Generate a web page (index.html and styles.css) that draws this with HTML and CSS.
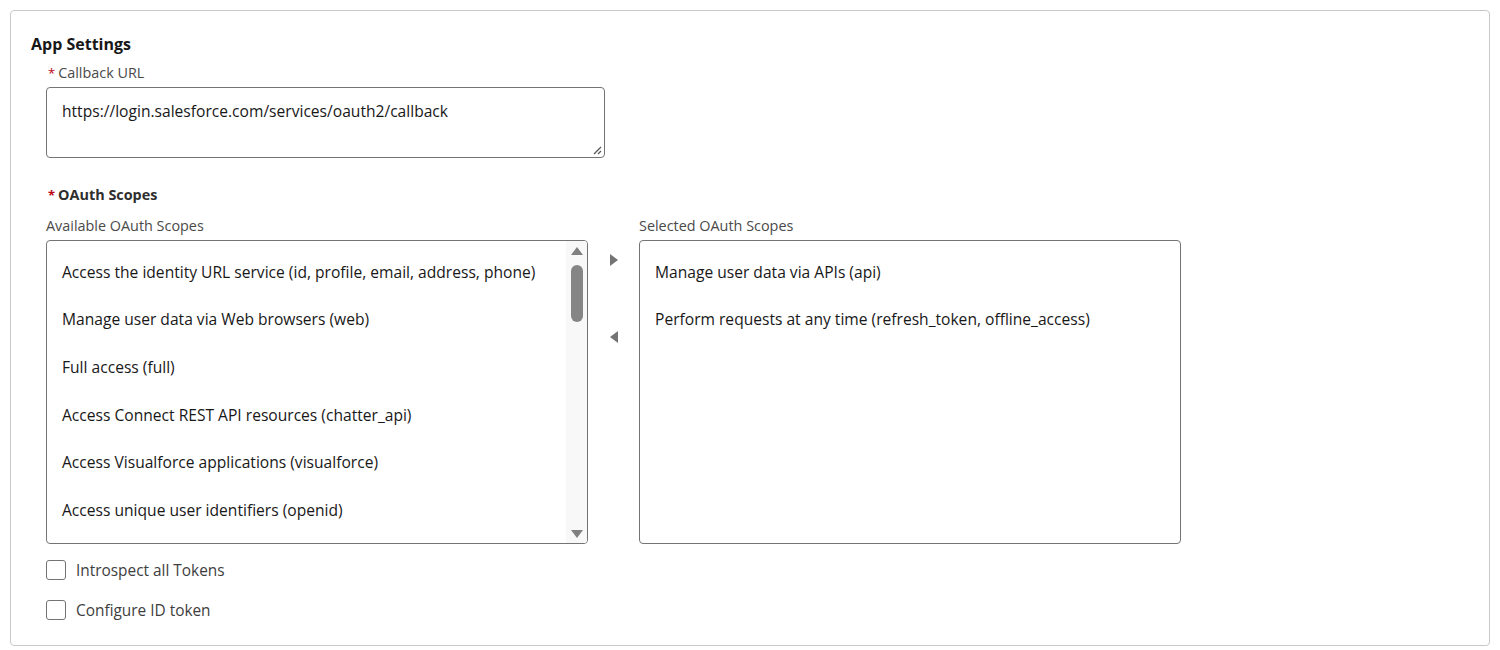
FILE: index.html
```html
<!DOCTYPE html>
<html lang="en">
<head>
<meta charset="utf-8">
<title>App Settings</title>
<link rel="stylesheet" href="styles.css">
</head>
<body>
<div class="card">
  <h2 class="title">App Settings</h2>
  <div class="field">
    <div class="label"><span class="req">*</span>Callback URL</div>
    <div class="textarea">https://login.salesforce.com/services/oauth2/callback
      <svg class="grip" width="10" height="10" viewBox="0 0 10 10"><path d="M9 2 L2 9 M9 6 L6 9" stroke="#555" stroke-width="1.2" fill="none"/></svg>
    </div>
  </div>
  <div class="group-label"><span class="req">*</span>OAuth Scopes</div>
  <div class="dueling">
    <div class="col">
      <div class="label plain">Available OAuth Scopes</div>
      <div class="listbox">
        <ul class="items">
          <li>Access the identity URL service (id, profile, email, address, phone)</li>
          <li>Manage user data via Web browsers (web)</li>
          <li>Full access (full)</li>
          <li>Access Connect REST API resources (chatter_api)</li>
          <li>Access Visualforce applications (visualforce)</li>
          <li>Access unique user identifiers (openid)</li>
        </ul>
        <div class="scrollbar">
          <svg class="sb-arrow" width="12" height="8" viewBox="0 0 12 8"><path d="M6 0 L12 8 L0 8 Z" fill="#808080"/></svg>
          <div class="thumb"></div>
          <div class="sb-spacer"></div>
          <svg class="sb-arrow" width="12" height="8" viewBox="0 0 12 8"><path d="M0 0 L12 0 L6 8 Z" fill="#808080"/></svg>
        </div>
      </div>
    </div>
    <div class="movers">
      <svg class="mv" width="8" height="12" viewBox="0 0 8 12"><path d="M0 0 L8 6 L0 12 Z" fill="#747474"/></svg>
      <svg class="mv mv2" width="8" height="12" viewBox="0 0 8 12"><path d="M8 0 L0 6 L8 12 Z" fill="#747474"/></svg>
    </div>
    <div class="col">
      <div class="label plain">Selected OAuth Scopes</div>
      <div class="listbox">
        <ul class="items">
          <li>Manage user data via APIs (api)</li>
          <li>Perform requests at any time (refresh_token, offline_access)</li>
        </ul>
      </div>
    </div>
  </div>
  <div class="checks">
    <label class="check"><span class="box"></span>Introspect all Tokens</label>
    <label class="check"><span class="box"></span>Configure ID token</label>
  </div>
</div>
</body>
</html>
```
FILE: styles.css
```css
html, body {
  margin: 0;
  padding: 0;
  background: #ffffff;
}
body {
  padding: 10px;
  font-family: "Open Sans", "Noto Sans", sans-serif;
  color: #181818;
}
.card {
  width: 1480px;
  height: 636px;
  box-sizing: border-box;
  border: 1px solid #c9c9c9;
  border-radius: 4px;
  padding: 22px 0 0 20px;
}
.title {
  margin: 0;
  font-size: 16px;
  font-weight: 700;
  line-height: 22px;
  color: #181818;
}
.field {
  margin-left: 15px;
  margin-top: 8px;
}
.label {
  font-size: 14.4px;
  line-height: 20px;
  color: #4a4a4a;
}
.req {
  color: #ba0517;
  margin: 0 3px 0 2px;
  font-size: 13px;
}
.textarea {
  position: relative;
  margin-top: 4px;
  width: 559px;
  height: 71px;
  box-sizing: border-box;
  border: 1px solid #747474;
  border-radius: 4px;
  padding: 12px 15px 0 15px;
  font-size: 15.6px;
  line-height: 22px;
  color: #181818;
}
.grip {
  position: absolute;
  right: 2px;
  bottom: 2px;
}
.group-label {
  margin: 26px 0 0 15px;
  font-size: 14.4px;
  font-weight: 700;
  line-height: 22px;
  color: #2e2e2e;
}
.dueling {
  display: flex;
  margin: 10px 0 0 15px;
}
.col {
  display: flex;
  flex-direction: column;
}
.plain {
  margin-bottom: 4px;
}
.listbox {
  display: flex;
  width: 542px;
  height: 304px;
  box-sizing: border-box;
  border: 1px solid #747474;
  border-radius: 4px;
  overflow: hidden;
}
.items {
  list-style: none;
  margin: 0;
  padding: 7px 0 0 15px;
  flex: 1;
}
.items li {
  font-size: 15.6px;
  line-height: 22px;
  padding: 12.8px 0;
  color: #181818;
  white-space: nowrap;
}
.scrollbar {
  width: 21px;
  background: #f8f8f8;
  display: flex;
  flex-direction: column;
  align-items: center;
  padding: 6px 0 5px 0;
  box-sizing: border-box;
}
.thumb {
  width: 12px;
  height: 57px;
  margin-top: 10px;
  border-radius: 6px;
  background: #858585;
}
.sb-spacer {
  flex: 1;
}
.movers {
  width: 51px;
  display: flex;
  flex-direction: column;
  align-items: center;
  padding-top: 38px;
  box-sizing: border-box;
}
.mv {
  display: block;
}
.mv2 {
  margin-top: 65px;
}
.checks {
  margin: 6px 0 0 15px;
  display: flex;
  flex-direction: column;
}
.check {
  display: flex;
  align-items: center;
  height: 40px;
  font-size: 15.4px;
  color: #3e3e3e;
}
.box {
  width: 20px;
  height: 20px;
  box-sizing: border-box;
  border: 1px solid #747474;
  border-radius: 3px;
  margin-right: 10px;
  background: #fff;
}
```
